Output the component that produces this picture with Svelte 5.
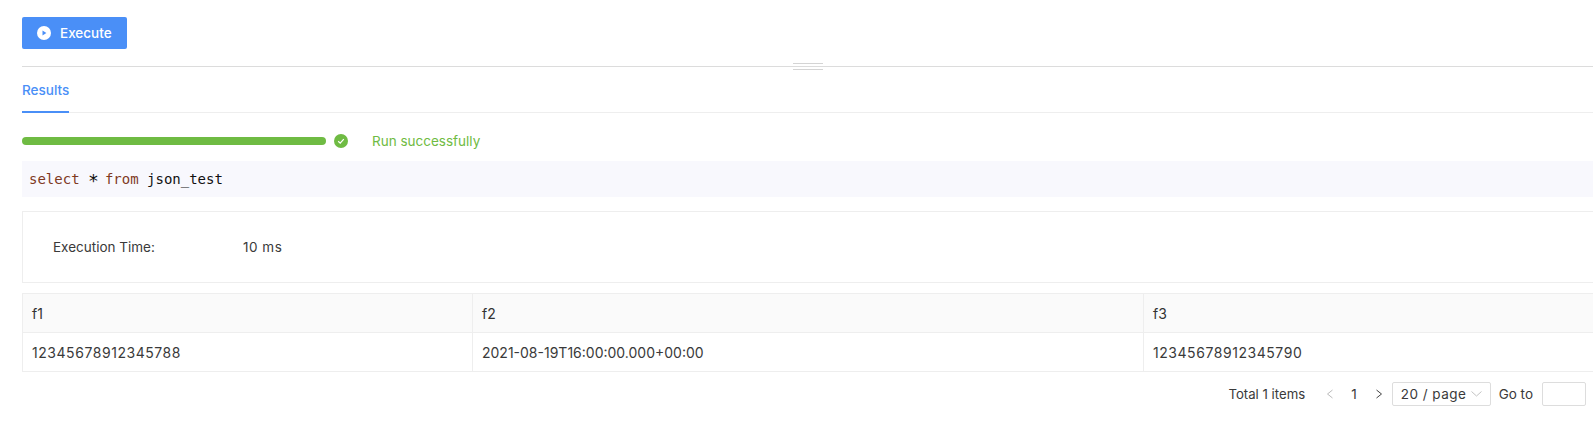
<script lang="ts">
	const columns = ['f1', 'f2', 'f3'];
	const rows = [['12345678912345788', '2021-08-19T16:00:00.000+00:00', '12345678912345790']];
	const isNumber = (value: string) => /^\d+$/.test(value);
</script>

<div class="page">
	<div class="toolbar">
		<button class="execute">
			<svg width="14" height="14" viewBox="0 0 14 14">
				<circle cx="7" cy="7" r="7" fill="#fff" />
				<path d="M5.5 4.4 L9.4 7 L5.5 9.6 Z" fill="#4a8ff7" />
			</svg>
			Execute
		</button>
	</div>

	<div class="divider">
		<span class="handle"></span>
	</div>

	<div class="tabs">
		<div class="tab">Results</div>
	</div>

	<div class="progress">
		<div class="bar"></div>
		<svg class="check" width="14" height="14" viewBox="0 0 14 14">
			<circle cx="7" cy="7" r="7" fill="#6fbb43" />
			<path d="M4.2 7.2 L6.2 9.1 L9.8 5.2" fill="none" stroke="#fff" stroke-width="1.2" />
		</svg>
		<span class="status">Run successfully</span>
	</div>

	<div class="sql"><span class="kw">select</span> <span class="star">∗</span> <span class="kw">from</span> json_test</div>

	<div class="stats">
		<span class="label">Execution Time:</span>
		<span class="value">10 ms</span>
	</div>

	<table>
		<thead>
			<tr>
				{#each columns as col}
					<th>{col}</th>
				{/each}
			</tr>
		</thead>
		<tbody>
			{#each rows as row}
				<tr>
					{#each row as cell}
						<td class:num={isNumber(cell)}>{cell}</td>
					{/each}
				</tr>
			{/each}
		</tbody>
	</table>

	<div class="pagination">
		<span class="total">Total 1 items</span>
		<svg class="arrow" width="8" height="10" viewBox="0 0 8 10">
			<path d="M6.5 1 L1.5 5 L6.5 9" fill="none" stroke="#bbb" />
		</svg>
		<span class="current">1</span>
		<svg class="arrow" width="8" height="10" viewBox="0 0 8 10">
			<path d="M1.5 1 L6.5 5 L1.5 9" fill="none" stroke="#444" />
		</svg>
		<div class="size">
			<span class="size-label">20 / page</span>
			<svg width="11" height="6" viewBox="0 0 11 6">
				<path d="M.5 .5 L5.5 5 L10.5 .5" fill="none" stroke="#c4c4c4" />
			</svg>
		</div>
		<span class="goto">Go to</span>
		<div class="jump"></div>
	</div>
</div>

<style>
	:global(body) {
		background: #fff;
	}

	.page {
		height: 426px;
		box-sizing: border-box;
		padding: 17px 0 0 22px;
		font-family: Inter, "Noto Sans", sans-serif;
		font-size: 13.5px;
		color: #3a3a3a;
		overflow: hidden;
	}

	.toolbar {
		height: 32px;
	}

	.execute {
		display: flex;
		align-items: center;
		gap: 9px;
		width: 105px;
		height: 32px;
		padding: 0 0 0 15px;
		background: #4a8ff7;
		border: none;
		border-radius: 2px;
		color: #fff;
		font-family: inherit;
		font-size: 13.5px;
		font-weight: 500;
	}

	.divider {
		position: relative;
		height: 1px;
		margin-top: 17px;
		background: #dcdcdc;
	}

	.handle {
		position: absolute;
		left: 771px;
		top: -3px;
		box-sizing: border-box;
		width: 30px;
		height: 7px;
		border-top: 1px solid #d4d4d4;
		border-bottom: 1px solid #d4d4d4;
	}

	.tabs {
		height: 45px;
		border-bottom: 1px solid #eee;
	}

	.tab {
		box-sizing: border-box;
		width: 47px;
		height: 46px;
		padding-top: 15px;
		border-bottom: 2px solid #4a8ff7;
		color: #4a8ff7;
		font-weight: 500;
		white-space: nowrap;
	}

	.progress {
		display: flex;
		align-items: center;
		height: 20px;
		margin-top: 18px;
	}

	.bar {
		width: 304px;
		height: 8px;
		border-radius: 4px;
		background: #6fbb43;
	}

	.check {
		margin-left: 8px;
	}

	.status {
		margin-left: 24px;
		color: #6fbb43;
	}

	.sql {
		height: 36px;
		margin-top: 10px;
		padding-left: 7px;
		background: #f8f8fd;
		color: #111;
		font-family: "DejaVu Sans Mono", monospace;
		font-size: 14px;
		line-height: 36px;
	}

	.kw {
		color: #7f3a1f;
	}

	.star {
		display: inline-block;
		width: 8.43px;
		font-size: 18px;
		line-height: 0;
		text-align: center;
	}

	.stats {
		display: flex;
		box-sizing: border-box;
		height: 72px;
		margin-top: 14px;
		padding-left: 30px;
		align-items: center;
		border: 1px solid #eee;
		border-right: none;
	}

	.label {
		width: 190px;
	}

	.value {
		letter-spacing: 0.5px;
	}

	table {
		width: 1571px;
		margin-top: 10px;
		border-collapse: collapse;
		table-layout: fixed;
		border: 1px solid #eee;
		border-right: none;
	}

	th,
	td {
		box-sizing: border-box;
		height: 39px;
		padding: 0 9px;
		border: 1px solid #eee;
		font-size: 14px;
		font-weight: 400;
		text-align: left;
	}

	th:last-child,
	td:last-child {
		border-right: none;
	}

	td.num {
		letter-spacing: 0.55px;
	}

	th {
		background: #fafafa;
		color: #333;
	}

	th:nth-child(1) {
		width: 450px;
	}

	th:nth-child(2) {
		width: 671px;
	}

	.pagination {
		display: flex;
		justify-content: flex-end;
		align-items: center;
		height: 32px;
		margin-top: 6px;
		padding-right: 7px;
	}

	.arrow {
		flex: none;
	}

	.total {
		margin-right: 21px;
		font-size: 13.2px;
	}

	.current {
		margin: 0 18px 0 17px;
	}

	.size {
		display: flex;
		align-items: center;
		justify-content: space-between;
		box-sizing: border-box;
		width: 99px;
		height: 24px;
		margin-left: 9px;
		padding: 0 8px;
		border: 1px solid #ddd;
		border-radius: 2px;
	}

	.size-label {
		letter-spacing: 0.5px;
	}

	.goto {
		margin-left: 8px;
	}

	.jump {
		box-sizing: border-box;
		width: 44px;
		height: 24px;
		margin-left: 9px;
		border: 1px solid #ddd;
		border-radius: 2px;
	}
</style>
